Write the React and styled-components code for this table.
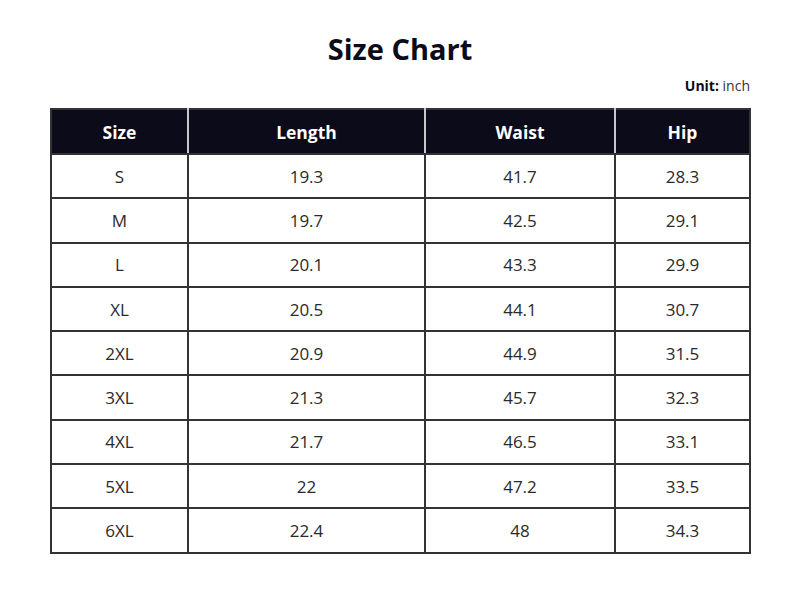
import React from 'react';
import styled, { createGlobalStyle } from 'styled-components';

const GlobalStyle = createGlobalStyle`
  html, body {
    margin: 0;
    padding: 0;
    background: #ffffff;
  }
  body {
    font-family: "Open Sans", "Noto Sans", "Liberation Sans", sans-serif;
    color: #111;
  }
`;

const Page = styled.div`
  width: 800px;
  height: 589px;
  box-sizing: border-box;
  padding: 30px 50px 0 50px;
  display: flex;
  flex-direction: column;
`;

const Title = styled.h1`
  margin: 0;
  font-size: 29px;
  font-weight: 700;
  line-height: 38px;
  text-align: center;
  color: #0b0b1a;
`;

const Unit = styled.div`
  align-self: flex-end;
  margin: 8px 0 13px 0;
  font-size: 14px;
  line-height: 19px;
  color: #333;

  b {
    font-weight: 700;
    color: #0b0b1a;
  }
`;

const Table = styled.table`
  width: 699px;
  border-collapse: collapse;
  table-layout: fixed;
  border: 2px solid #333;
`;

const HeadCell = styled.th`
  height: 43px;
  background: #0b0b1a;
  color: #fff;
  font-size: 17.5px;
  font-weight: 700;
  text-align: center;
  padding: 0;
  border-left: 2px solid #c8c8cc;
  border-bottom: 2px solid #333;

  &:first-child {
    border-left: none;
  }
`;

const Cell = styled.td`
  height: 42.3px;
  text-align: center;
  padding: 0;
  font-size: 17px;
  font-weight: 400;
  color: #2a2a2a;
  border: 2px solid #333;
`;

const columns = [
  { label: 'Size', width: 137 },
  { label: 'Length', width: 237 },
  { label: 'Waist', width: 190 },
  { label: 'Hip', width: 135 },
];

const rows = [
  ['S', '19.3', '41.7', '28.3'],
  ['M', '19.7', '42.5', '29.1'],
  ['L', '20.1', '43.3', '29.9'],
  ['XL', '20.5', '44.1', '30.7'],
  ['2XL', '20.9', '44.9', '31.5'],
  ['3XL', '21.3', '45.7', '32.3'],
  ['4XL', '21.7', '46.5', '33.1'],
  ['5XL', '22', '47.2', '33.5'],
  ['6XL', '22.4', '48', '34.3'],
];

export default function App() {
  return (
    <>
      <GlobalStyle />
      <Page>
        <Title>Size Chart</Title>
        <Unit>
          <b>Unit:</b> inch
        </Unit>
        <Table>
          <colgroup>
            {columns.map((c) => (
              <col key={c.label} style={{ width: c.width }} />
            ))}
          </colgroup>
          <thead>
            <tr>
              {columns.map((c) => (
                <HeadCell key={c.label}>{c.label}</HeadCell>
              ))}
            </tr>
          </thead>
          <tbody>
            {rows.map((r) => (
              <tr key={r[0]}>
                {r.map((v, i) => (
                  <Cell key={i}>{v}</Cell>
                ))}
              </tr>
            ))}
          </tbody>
        </Table>
      </Page>
    </>
  );
}
